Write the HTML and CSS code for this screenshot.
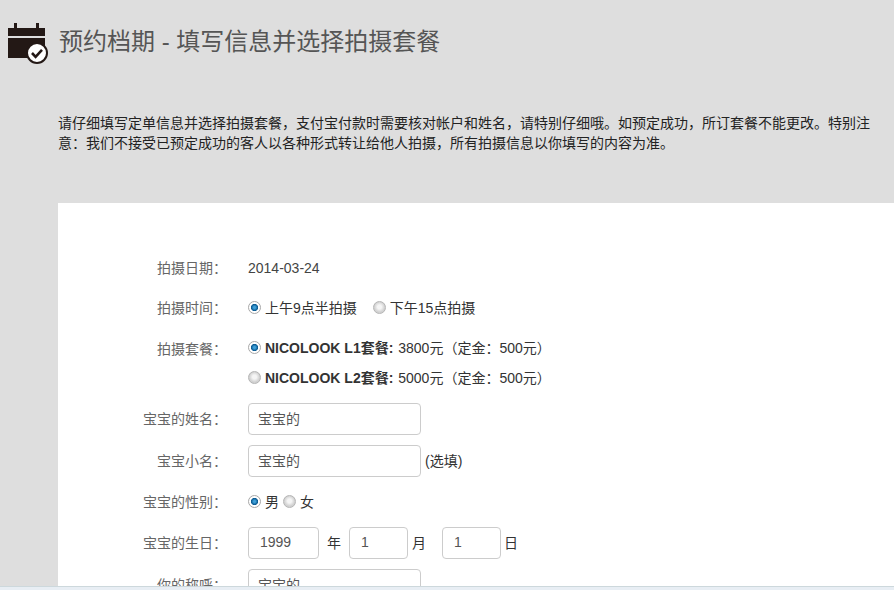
FILE: index.html
```html
<!DOCTYPE html>
<html lang="zh-CN">
<head>
  <meta charset="UTF-8">
  <meta name="viewport" content="width=device-width, initial-scale=1.0">
  <title>预约档期</title>
  <link rel="stylesheet" href="styles.css">
</head>
<body>

  <main>
    <header class="head">
      <svg class="head-icon" width="42" height="42" viewBox="0 0 42 42">
        <rect x="6" y="0" width="3" height="6" fill="#231815"/>
        <rect x="28" y="0" width="3" height="6" fill="#231815"/>
        <rect x="0" y="5" width="37" height="8" fill="#231815"/>
        <rect x="0" y="15" width="37" height="20" fill="#231815"/>
        <circle cx="29" cy="30" r="10" fill="#fff" stroke="#231815" stroke-width="2"/>
        <path d="M24 30l3.6 3.8 6.4-7" fill="none" stroke="#231815" stroke-width="2.6"/>
      </svg>
      <h1 class="title">预约档期 - 填写信息并选择拍摄套餐</h1>
    </header>

    <p class="intro">请仔细填写定单信息并选择拍摄套餐，支付宝付款时需要核对帐户和姓名，请特别仔细哦。如预定成功，所订套餐不能更改。特别注意：我们不接受已预定成功的客人以各种形式转让给他人拍摄，所有拍摄信息以你填写的内容为准。</p>

    <form class="card">
      <div class="row">
        <label class="lbl">拍摄日期：</label>
        <div class="val date">2014-03-24</div>
      </div>
      <div class="row">
        <label class="lbl">拍摄时间：</label>
        <div class="val">
          <span class="radio on"></span><span class="opt">上午9点半拍摄</span>
          <span class="radio gap"></span><span class="opt">下午15点拍摄</span>
        </div>
      </div>
      <div class="row row-pack">
        <label class="lbl">拍摄套餐：</label>
        <div class="val"><span class="radio on"></span><span class="opt"><b>NICOLOOK L1套餐:</b> 3800元（定金：500元）</span></div>
      </div>
      <div class="row row-pack2">
        <label class="lbl"></label>
        <div class="val"><span class="radio"></span><span class="opt"><b>NICOLOOK L2套餐:</b> 5000元（定金：500元）</span></div>
      </div>
      <div class="row row-field">
        <label class="lbl">宝宝的姓名：</label>
        <div class="val"><input class="inp" type="text" value="宝宝的"></div>
      </div>
      <div class="row row-field">
        <label class="lbl">宝宝小名：</label>
        <div class="val"><input class="inp" type="text" value="宝宝的"><span class="note">(选填)</span></div>
      </div>
      <div class="row row-sex">
        <label class="lbl">宝宝的性别：</label>
        <div class="val">
          <span class="radio on"></span><span class="opt">男</span>
          <span class="radio sex"></span><span class="opt">女</span>
        </div>
      </div>
      <div class="row row-field">
        <label class="lbl">宝宝的生日：</label>
        <div class="val">
          <input class="inp inp-y" type="text" value="1999"><span class="unit">年</span>
          <input class="inp inp-d" type="text" value="1"><span class="unit unit-m">月</span>
          <input class="inp inp-d inp-last" type="text" value="1"><span class="unit unit-d">日</span>
        </div>
      </div>
      <div class="row row-field">
        <label class="lbl">你的称呼：</label>
        <div class="val"><input class="inp" type="text" value="宝宝的"></div>
      </div>
    </form>
  </main>

  <div class="bottom"></div>

</body>
</html>
```

FILE: styles.css
```css
html, body {
  height: 100%;
  overflow: hidden;
}
body {
  margin: 0;
  background-color: #dedede;
  color: #333;
  font-family: "Liberation Sans", Arial, "Noto Sans CJK SC", sans-serif;
  font-size: 14px;
}
.head {
  display: flex;
  align-items: flex-start;
  padding: 23px 0 0 8px;
  height: 45px;
}
.head-icon {
  flex: none;
}
.title {
  margin: 3px 0 0 9px;
  font-size: 24px;
  font-weight: normal;
  line-height: 32px;
  color: #555;
}
.intro {
  margin: 45px 20px 0 58px;
  line-height: 20px;
  color: #222;
}
.card {
  margin: 50px 0 0 58px;
  padding-top: 50px;
  background-color: #fff;
}
.row {
  display: flex;
  align-items: center;
  height: 30px;
  margin-bottom: 10px;
}
.row-pack {
  margin-bottom: 0;
}
.row-pack2 {
  margin-bottom: 10px;
}
.row-field {
  height: 32px;
}
.row-sex {
  height: 30px;
}
.lbl {
  width: 169px;
  flex: none;
  padding-bottom: 2px;
  text-align: right;
  color: #666;
}
.row-pack .lbl {
  padding-bottom: 0;
}
.val {
  margin-left: 21px;
  display: flex;
  align-items: center;
  padding-bottom: 2px;
  color: #333;
}
.date {
  padding-bottom: 0;
  color: #444;
}
.row-field .val {
  padding-bottom: 0;
}
.radio {
  width: 13px;
  height: 13px;
  flex: none;
  border-radius: 50%;
  box-sizing: border-box;
  border: 1px solid #b5b5b5;
  background: radial-gradient(circle at 50% 45%, #f5f5f5 0 2px, #d2d2d2 5px);
}
.radio.on {
  background: radial-gradient(circle at 50% 50%, #3fa0d8 0 1px, #0a5a92 3.2px, #fff 4px);
  border-color: #a8a8a8;
}
.radio.gap {
  margin-left: 16px;
}
.radio.sex {
  margin-left: 4px;
}
.opt {
  margin-left: 4px;
}
.opt b {
  margin-right: 1px;
}
.inp {
  width: 173px;
  height: 32px;
  box-sizing: border-box;
  padding: 0 9px 2px;
  border: 1px solid #ccc;
  border-radius: 4px;
  font: inherit;
  color: #555;
  background-color: #fff;
}
.inp-y {
  width: 71px;
  padding: 0 11px 2px;
}
.inp-d {
  width: 59px;
  padding: 0 11px 2px;
}
.inp-last {
  margin-left: 16px;
}
.unit {
  margin: 0 8px 2px;
}
.unit-m {
  margin: 0 0 2px 4px;
}
.unit-d {
  margin: 0 0 2px 3px;
}
.note {
  margin: 0 0 2px 4px;
}
.bottom {
  position: fixed;
  left: 0;
  right: 0;
  bottom: 0;
  height: 4px;
  background-color: #e8eef4;
  border-top: 1px solid #cdd8dc;
  box-sizing: border-box;
}
```
